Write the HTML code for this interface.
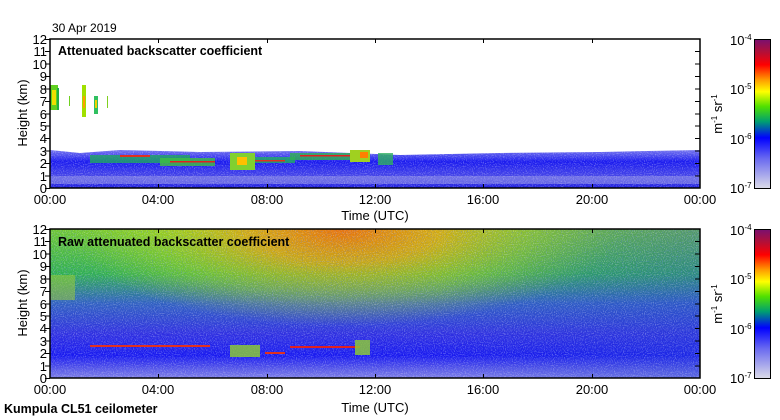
<!DOCTYPE html>
<html><head><style>
html,body{margin:0;padding:0;background:#fff;}
svg{display:block;}
text{font-family:"Liberation Sans",sans-serif;font-size:13px;fill:#000;}
.b{font-weight:bold;font-size:12.5px;}
</style></head><body>
<svg width="780" height="420" viewBox="0 0 780 420" xmlns="http://www.w3.org/2000/svg">
<defs>
<linearGradient id="cb" x1="0" y1="0" x2="0" y2="1">
<stop offset="0" stop-color="#7a1070"/>
<stop offset="0.08" stop-color="#b0103a"/>
<stop offset="0.17" stop-color="#ff0000"/>
<stop offset="0.27" stop-color="#ff9a00"/>
<stop offset="0.35" stop-color="#ffff00"/>
<stop offset="0.45" stop-color="#50e000"/>
<stop offset="0.55" stop-color="#00a070"/>
<stop offset="0.66" stop-color="#0000ff"/>
<stop offset="0.8" stop-color="#6a6af0"/>
<stop offset="1" stop-color="#dcdce8"/>
</linearGradient>
<linearGradient id="p1low" x1="0" y1="0" x2="0" y2="1">
<stop offset="0" stop-color="#3a3ae8" stop-opacity="0.7"/>
<stop offset="0.3" stop-color="#1a1aef"/>
<stop offset="0.7" stop-color="#4848e8"/>
<stop offset="1" stop-color="#2020e0"/>
</linearGradient>
<linearGradient id="p2v" x1="0" y1="0" x2="0" y2="1">
<stop offset="0" stop-color="#70c830"/>
<stop offset="0.3" stop-color="#30b050"/>
<stop offset="0.5" stop-color="#3060c0"/>
<stop offset="0.7" stop-color="#3030e0"/>
<stop offset="0.85" stop-color="#1818f0"/>
<stop offset="0.93" stop-color="#5050e8"/>
<stop offset="1" stop-color="#8080e8"/>
</linearGradient>
<radialGradient id="p2r" cx="0.45" cy="0.0" r="0.5" gradientTransform="translate(0.45 0) scale(0.85 1.3) translate(-0.45 0)">
<stop offset="0" stop-color="#ff6000" stop-opacity="0.85"/>
<stop offset="0.35" stop-color="#ffa000" stop-opacity="0.7"/>
<stop offset="0.7" stop-color="#d0e000" stop-opacity="0.35"/>
<stop offset="1" stop-color="#c0e000" stop-opacity="0"/>
</radialGradient>
<linearGradient id="p2h" x1="0" y1="0" x2="1" y2="0">
<stop offset="0" stop-color="#2040d0" stop-opacity="0"/>
<stop offset="0.6" stop-color="#2040d0" stop-opacity="0"/>
<stop offset="1" stop-color="#2040d0" stop-opacity="0.35"/>
</linearGradient>
<filter id="nz" x="0" y="0" width="100%" height="100%">
<feTurbulence type="fractalNoise" baseFrequency="0.9" numOctaves="1" seed="3"/>
<feColorMatrix values="0 0 0 0 1  0 0 0 0 1  0 0 0 0 1  0 0 0 -2.5 1.3"/>
</filter>
<filter id="nz2" x="0" y="0" width="100%" height="100%">
<feTurbulence type="fractalNoise" baseFrequency="0.8" numOctaves="1" seed="7"/>
<feColorMatrix values="0 0 0 0 0.1  0 0 0 0 0.2  0 0 0 0 0.9  0 0 0 -3 1.4"/>
</filter>
</defs>

<!-- Top panel -->
<text x="52" y="32" style="font-size:12px">30 Apr 2019</text>
<rect x="50" y="39" width="650" height="149" fill="#fff"/>
<path d="M50 150 L80 153 L120 150 L200 152 L300 151 L400 155 L500 153 L600 152 L700 150 L700 188 L50 188Z" fill="url(#p1low)"/>
<rect x="50" y="176" width="650" height="8" fill="#8a8ae8" opacity="0.6"/>
<rect x="50" y="150" width="650" height="38" filter="url(#nz)" opacity="0.45"/>
<!-- clouds -->
<rect x="50" y="85" width="8" height="25" fill="#60d020"/><rect x="52" y="90" width="4" height="15" fill="#f0e000"/>
<rect x="57" y="88" width="2" height="22" fill="#20b040"/>
<rect x="69" y="96" width="1" height="10" fill="#70d020"/>
<rect x="82" y="85" width="4" height="32" fill="#a0e000"/><rect x="83" y="96" width="2" height="12" fill="#ffa000"/>
<rect x="94" y="96" width="4" height="18" fill="#30c060"/><rect x="95" y="100" width="2" height="8" fill="#f0d000"/>
<rect x="107" y="96" width="1" height="12" fill="#80d020"/>
<rect x="90" y="155" width="100" height="8" fill="#20a860" opacity="0.8"/>
<rect x="120" y="155" width="30" height="2" fill="#e03020"/>
<rect x="160" y="158" width="55" height="8" fill="#40c040" opacity="0.8"/>
<rect x="170" y="161" width="45" height="1.5" fill="#e02020"/>
<rect x="230" y="153" width="25" height="17" fill="#80d030"/>
<rect x="237" y="157" width="10" height="8" fill="#ffc000"/>
<rect x="255" y="157" width="40" height="6" fill="#20b060" opacity="0.8"/>
<rect x="255" y="160" width="30" height="1.5" fill="#e03020"/>
<rect x="290" y="153" width="70" height="7" fill="#30b050" opacity="0.8"/>
<rect x="300" y="155" width="55" height="1.5" fill="#e02020"/>
<rect x="350" y="150" width="20" height="12" fill="#a0d020"/>
<rect x="360" y="152" width="8" height="6" fill="#ff8000"/>
<rect x="378" y="153" width="15" height="12" fill="#30b060" opacity="0.8"/>
<rect x="50" y="39" width="650" height="149" fill="none" stroke="#000" stroke-width="1.5"/>
<text x="58" y="55" class="b">Attenuated backscatter coefficient</text>

<!-- Bottom panel -->
<rect x="50" y="229" width="650" height="149" fill="url(#p2v)"/>
<rect x="50" y="229" width="650" height="149" fill="url(#p2r)"/>
<rect x="50" y="229" width="650" height="149" fill="url(#p2h)"/>
<rect x="50" y="229" width="650" height="149" filter="url(#nz)" opacity="0.45"/>
<rect x="50" y="229" width="650" height="149" filter="url(#nz2)" opacity="0.5"/>
<rect x="50" y="275" width="25" height="25" fill="#a0d030" opacity="0.5"/>
<rect x="90" y="345" width="120" height="2" fill="#e03020"/>
<rect x="230" y="345" width="30" height="12" fill="#90d030" opacity="0.8"/>
<rect x="265" y="352" width="20" height="2" fill="#e03020"/>
<rect x="290" y="346" width="70" height="2" fill="#e02020"/>
<rect x="355" y="340" width="15" height="15" fill="#90d030" opacity="0.8"/>
<rect x="50" y="229" width="650" height="149" fill="none" stroke="#000" stroke-width="1.5"/>
<text x="58" y="246" class="b">Raw attenuated backscatter coefficient</text>

<g id="ticks">
<g text-anchor="end">
<text x="47" y="193">0</text><text x="47" y="181">1</text><text x="47" y="168">2</text><text x="47" y="156">3</text><text x="47" y="143">4</text><text x="47" y="131">5</text><text x="47" y="119">6</text><text x="47" y="106">7</text><text x="47" y="94">8</text><text x="47" y="81">9</text><text x="47" y="69">10</text><text x="47" y="56">11</text><text x="47" y="44">12</text>
<text x="47" y="383">0</text><text x="47" y="371">1</text><text x="47" y="358">2</text><text x="47" y="346">3</text><text x="47" y="333">4</text><text x="47" y="321">5</text><text x="47" y="309">6</text><text x="47" y="296">7</text><text x="47" y="284">8</text><text x="47" y="271">9</text><text x="47" y="259">10</text><text x="47" y="246">11</text><text x="47" y="234">12</text>
</g>
<g text-anchor="middle">
<text x="50" y="204">00:00</text><text x="158" y="204">04:00</text><text x="267" y="204">08:00</text><text x="375" y="204">12:00</text><text x="483" y="204">16:00</text><text x="592" y="204">20:00</text><text x="700" y="204">00:00</text>
<text x="375" y="220">Time (UTC)</text>
<text x="50" y="394">00:00</text><text x="158" y="394">04:00</text><text x="267" y="394">08:00</text><text x="375" y="394">12:00</text><text x="483" y="394">16:00</text><text x="592" y="394">20:00</text><text x="700" y="394">00:00</text>
<text x="375" y="412">Time (UTC)</text>
</g>
<text transform="translate(27 113) rotate(-90)" text-anchor="middle">Height (km)</text>
<text transform="translate(27 303) rotate(-90)" text-anchor="middle">Height (km)</text>
<path stroke="#000" stroke-width="1" d="M45 188.5h5M45 176h5M45 163.5h5M45 151h5M45 138.5h5M45 126h5M45 114h5M45 101.5h5M45 89h5M45 76.5h5M45 64h5M45 51.5h5M45 39.5h5M695 176h5M695 163.5h5M695 151h5M695 138.5h5M695 126h5M695 114h5M695 101.5h5M695 89h5M695 76.5h5M695 64h5M695 51.5h5M158.5 39v4M267.5 39v4M375.5 39v4M483.5 39v4M592.5 39v4M158.5 184v4M267.5 184v4M375.5 184v4M483.5 184v4M592.5 184v4"/>
<path stroke="#000" stroke-width="1" d="M45 378.5h5M45 366h5M45 353.5h5M45 341h5M45 328.5h5M45 316h5M45 304h5M45 291.5h5M45 279h5M45 266.5h5M45 254h5M45 241.5h5M45 229.5h5M695 366h5M695 353.5h5M695 341h5M695 328.5h5M695 316h5M695 304h5M695 291.5h5M695 279h5M695 266.5h5M695 254h5M695 241.5h5M158.5 229v4M267.5 229v4M375.5 229v4M483.5 229v4M592.5 229v4M158.5 374v4M267.5 374v4M375.5 374v4M483.5 374v4M592.5 374v4"/>
</g>

<!-- Colorbars -->
<rect x="754.5" y="39.5" width="16" height="149" fill="url(#cb)" stroke="#000"/>
<rect x="754.5" y="229.5" width="16" height="149" fill="url(#cb)" stroke="#000"/>
<g>
<text x="730" y="45">10<tspan font-size="8" dy="-5">-4</tspan></text>
<text x="730" y="94">10<tspan font-size="8" dy="-5">-5</tspan></text>
<text x="730" y="144">10<tspan font-size="8" dy="-5">-6</tspan></text>
<text x="730" y="193">10<tspan font-size="8" dy="-5">-7</tspan></text>
<text x="730" y="235">10<tspan font-size="8" dy="-5">-4</tspan></text>
<text x="730" y="284">10<tspan font-size="8" dy="-5">-5</tspan></text>
<text x="730" y="334">10<tspan font-size="8" dy="-5">-6</tspan></text>
<text x="730" y="383">10<tspan font-size="8" dy="-5">-7</tspan></text>
</g>
<text transform="translate(722 114) rotate(-90)" text-anchor="middle">m<tspan font-size="8" dy="-5">-1</tspan><tspan dy="5"> sr</tspan><tspan font-size="8" dy="-5">-1</tspan></text>
<text transform="translate(722 304) rotate(-90)" text-anchor="middle">m<tspan font-size="8" dy="-5">-1</tspan><tspan dy="5"> sr</tspan><tspan font-size="8" dy="-5">-1</tspan></text>

<text x="4" y="413" class="b">Kumpula CL51 ceilometer</text>
</svg>
</body></html>
